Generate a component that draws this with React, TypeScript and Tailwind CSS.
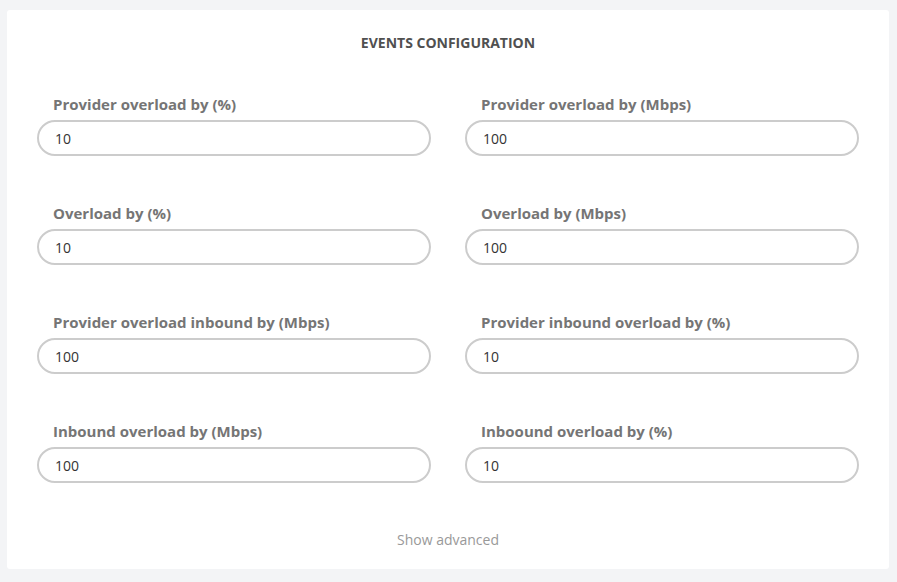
import React from "react";

const fields: [string, string][] = [
  ["Provider overload by (%)", "10"],
  ["Provider overload by (Mbps)", "100"],
  ["Overload by (%)", "10"],
  ["Overload by (Mbps)", "100"],
  ["Provider overload inbound by (Mbps)", "100"],
  ["Provider inbound overload by (%)", "10"],
  ["Inbound overload by (Mbps)", "100"],
  ["Inboound overload by (%)", "10"],
];

export default function App() {
  return (
    <div
      className="w-[897px] h-[582px] bg-[#f3f4f6] pt-[10px] pl-[7px] overflow-hidden"
      style={{ fontFamily: '"Open Sans", sans-serif' }}
    >
      <div className="w-[882px] h-[559px] bg-white rounded-[3px] pt-[23px] px-[30px]">
        <h1 className="text-center text-[14px] leading-[20px] font-bold text-[#505050]">
          EVENTS CONFIGURATION
        </h1>
        <div className="grid grid-cols-2 gap-x-[34px] gap-y-[47px] mt-[41px]">
          {fields.map(([label, value]) => (
            <div key={label} className="flex flex-col">
              <label className="pl-[16px] text-[15px] leading-[20px] font-bold text-[#757575]">
                {label}
              </label>
              <input
                defaultValue={value}
                className="mt-[6px] h-[36px] w-full rounded-full border-2 border-[#cccccc] px-[16px] text-[14px] text-[#333] outline-none bg-white"
              />
            </div>
          ))}
        </div>
        <div className="mt-[47px] text-center text-[14px] leading-[20px] text-[#999999]">
          Show advanced
        </div>
      </div>
    </div>
  );
}
